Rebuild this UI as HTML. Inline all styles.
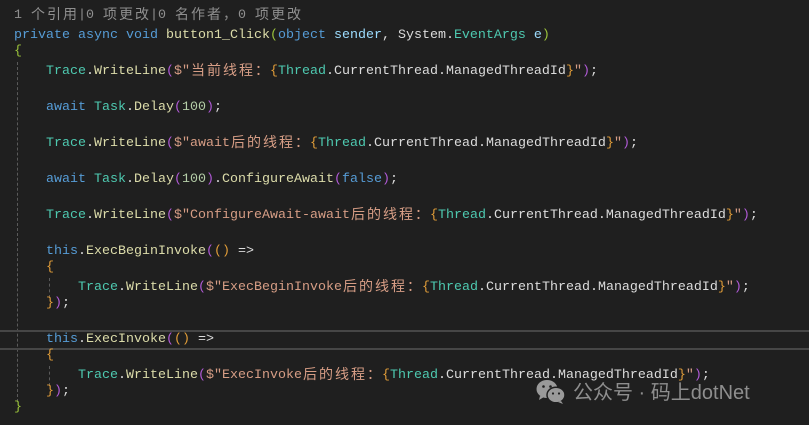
<!DOCTYPE html>
<html><head><meta charset="utf-8">
<style>
body{margin:0;width:809px;height:425px;background:#1f1f1f;overflow:hidden;position:relative;font-family:"Liberation Mono","Noto Sans CJK SC",monospace;font-size:13.33px;color:#dcdcdc}
.l{position:absolute;left:14px;height:18px;line-height:18px;white-space:pre;overflow:hidden}
.c{display:inline-block;width:16px;height:18px;line-height:18px;vertical-align:top;position:relative;top:-2px;font-family:"Noto Sans CJK SC",sans-serif;font-size:14px;text-align:center}
.k{color:#569cd6}.t{color:#4ec9b0}.m{color:#dcdcaa}.s{color:#d69d85}.p{color:#9cdcfe}.n{color:#b5cea8}
.g{color:#9bc33b}.pu{color:#b05ad6}.o{color:#e09c38}
.guide{position:absolute;width:0;border-left:1px dashed #5a5a5a}
.cl{color:#8f8f8f}
</style></head><body>
<div class="guide" style="left:17px;top:62px;height:340px"></div>
<div class="guide" style="left:49px;top:278px;height:20px"></div>
<div class="guide" style="left:49px;top:366px;height:20px"></div>
<div style="position:absolute;left:0;right:0;top:330px;height:2px;background:#464646"></div>
<div style="position:absolute;left:0;right:0;top:348px;height:2px;background:#464646"></div>

<div class="l cl" style="top:7px">1 <span class="c">个</span><span class="c">引</span><span class="c">用</span>|0 <span class="c">项</span><span class="c">更</span><span class="c">改</span>|0 <span class="c">名</span><span class="c">作</span><span class="c">者</span><span class="c">，</span>0 <span class="c">项</span><span class="c">更</span><span class="c">改</span></div>
<div class="l" style="top:27px"><span class="k">private async void</span> <span class="m">button1_Click</span><span class="g">(</span><span class="k">object</span> <span class="p">sender</span>, System.<span class="t">EventArgs</span> <span class="p">e</span><span class="g">)</span></div>
<div class="l g" style="top:43px">{</div>
<div class="l" style="top:63px">    <span class="t">Trace</span>.<span class="m">WriteLine</span><span class="pu">(</span><span class="s">$"<span class="c">当</span><span class="c">前</span><span class="c">线</span><span class="c">程</span><span class="c">：</span></span><span class="o">{</span><span class="t">Thread</span>.CurrentThread.ManagedThreadId<span class="o">}</span><span class="s">"</span><span class="pu">)</span>;</div>
<div class="l" style="top:99px">    <span class="k">await</span> <span class="t">Task</span>.<span class="m">Delay</span><span class="pu">(</span><span class="n">100</span><span class="pu">)</span>;</div>
<div class="l" style="top:135px">    <span class="t">Trace</span>.<span class="m">WriteLine</span><span class="pu">(</span><span class="s">$"await<span class="c">后</span><span class="c">的</span><span class="c">线</span><span class="c">程</span><span class="c">：</span></span><span class="o">{</span><span class="t">Thread</span>.CurrentThread.ManagedThreadId<span class="o">}</span><span class="s">"</span><span class="pu">)</span>;</div>
<div class="l" style="top:171px">    <span class="k">await</span> <span class="t">Task</span>.<span class="m">Delay</span><span class="pu">(</span><span class="n">100</span><span class="pu">)</span>.<span class="m">ConfigureAwait</span><span class="pu">(</span><span class="k">false</span><span class="pu">)</span>;</div>
<div class="l" style="top:207px">    <span class="t">Trace</span>.<span class="m">WriteLine</span><span class="pu">(</span><span class="s">$"ConfigureAwait-await<span class="c">后</span><span class="c">的</span><span class="c">线</span><span class="c">程</span><span class="c">：</span></span><span class="o">{</span><span class="t">Thread</span>.CurrentThread.ManagedThreadId<span class="o">}</span><span class="s">"</span><span class="pu">)</span>;</div>
<div class="l" style="top:243px">    <span class="k">this</span>.<span class="m">ExecBeginInvoke</span><span class="pu">(</span><span class="o">()</span> =&gt;</div>
<div class="l o" style="top:259px">    {</div>
<div class="l" style="top:279px">        <span class="t">Trace</span>.<span class="m">WriteLine</span><span class="pu">(</span><span class="s">$"ExecBeginInvoke<span class="c">后</span><span class="c">的</span><span class="c">线</span><span class="c">程</span><span class="c">：</span></span><span class="o">{</span><span class="t">Thread</span>.CurrentThread.ManagedThreadId<span class="o">}</span><span class="s">"</span><span class="pu">)</span>;</div>
<div class="l" style="top:295px">    <span class="o">}</span><span class="pu">)</span>;</div>
<div class="l" style="top:331px">    <span class="k">this</span>.<span class="m">ExecInvoke</span><span class="pu">(</span><span class="o">()</span> =&gt;</div>
<div class="l o" style="top:347px">    {</div>
<div class="l" style="top:367px">        <span class="t">Trace</span>.<span class="m">WriteLine</span><span class="pu">(</span><span class="s">$"ExecInvoke<span class="c">后</span><span class="c">的</span><span class="c">线</span><span class="c">程</span><span class="c">：</span></span><span class="o">{</span><span class="t">Thread</span>.CurrentThread.ManagedThreadId<span class="o">}</span><span class="s">"</span><span class="pu">)</span>;</div>
<div class="l" style="top:383px">    <span class="o">}</span><span class="pu">)</span>;</div>
<div class="l g" style="top:399px">}</div>

<svg style="position:absolute;left:536px;top:379px" width="30" height="26" viewBox="0 0 30 26">
<ellipse cx="11" cy="10" rx="10.5" ry="9" fill="#9a9a9a"/>
<path d="M4 17 L3 21 L8 18Z" fill="#9a9a9a"/>
<ellipse cx="20" cy="16" rx="9" ry="7.8" fill="#9a9a9a" stroke="#1f1f1f" stroke-width="1.5"/>
<path d="M25 22 L27 25 L22 23Z" fill="#9a9a9a"/>
<circle cx="7.5" cy="7.5" r="1.3" fill="#1f1f1f"/><circle cx="14.5" cy="7.5" r="1.3" fill="#1f1f1f"/>
<circle cx="17" cy="14.5" r="1.1" fill="#1f1f1f"/><circle cx="23" cy="14.5" r="1.1" fill="#1f1f1f"/>
</svg>
<div style="position:absolute;left:573px;top:380px;font-family:'Liberation Sans','Noto Sans CJK SC',sans-serif;font-size:20px;line-height:26px;color:#8e8e8e;white-space:nowrap">公众号 · 码上dotNet</div>
</body></html>
